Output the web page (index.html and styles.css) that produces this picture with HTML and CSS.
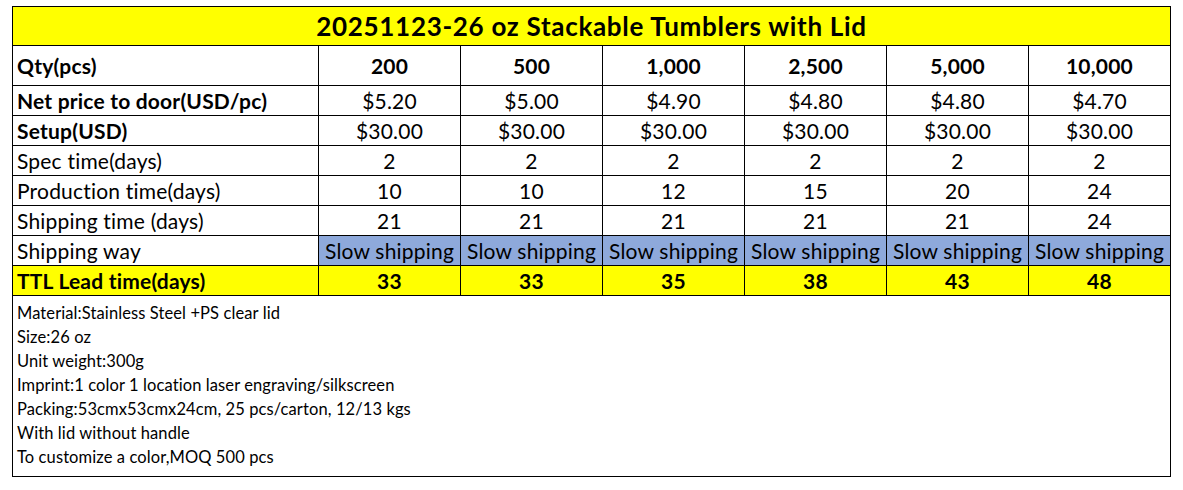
FILE: index.html
```html
<!DOCTYPE html>
<html>
<head>
<meta charset="utf-8">
<link rel="stylesheet" href="styles.css">
</head>
<body>
<table class="sheet">
  <colgroup>
    <col class="c-label"><col class="c-val"><col class="c-val"><col class="c-val"><col class="c-val"><col class="c-val"><col class="c-val">
  </colgroup>
  <tr class="r-title"><td colspan="7" class="title">20251123-26 oz Stackable Tumblers with Lid</td></tr>
  <tr class="r-qty bold"><td class="lbl">Qty(pcs)</td><td>200</td><td>500</td><td>1,000</td><td>2,500</td><td>5,000</td><td>10,000</td></tr>
  <tr class="r"><td class="lbl bold">Net price to door(USD/pc)</td><td>$5.20</td><td>$5.00</td><td>$4.90</td><td>$4.80</td><td>$4.80</td><td>$4.70</td></tr>
  <tr class="r"><td class="lbl bold">Setup(USD)</td><td>$30.00</td><td>$30.00</td><td>$30.00</td><td>$30.00</td><td>$30.00</td><td>$30.00</td></tr>
  <tr class="r"><td class="lbl">Spec time(days)</td><td>2</td><td>2</td><td>2</td><td>2</td><td>2</td><td>2</td></tr>
  <tr class="r"><td class="lbl">Production time(days)</td><td>10</td><td>10</td><td>12</td><td>15</td><td>20</td><td>24</td></tr>
  <tr class="r"><td class="lbl">Shipping time (days)</td><td>21</td><td>21</td><td>21</td><td>21</td><td>21</td><td>24</td></tr>
  <tr class="r r-way"><td class="lbl">Shipping way</td><td class="blue">Slow shipping</td><td class="blue">Slow shipping</td><td class="blue">Slow shipping</td><td class="blue">Slow shipping</td><td class="blue">Slow shipping</td><td class="blue">Slow shipping</td></tr>
  <tr class="r r-ttl bold"><td class="lbl">TTL Lead time(days)</td><td>33</td><td>33</td><td>35</td><td>38</td><td>43</td><td>48</td></tr>
  <tr class="r-notes"><td colspan="7" class="notes">
    <div class="note">Material:Stainless Steel +PS clear lid</div>
    <div class="note">Size:26 oz</div>
    <div class="note">Unit weight:300g</div>
    <div class="note">Imprint:1 color 1 location laser engraving/silkscreen</div>
    <div class="note">Packing:53cmx53cmx24cm, 25 pcs/carton, 12/13 kgs</div>
    <div class="note">With lid without handle</div>
    <div class="note">To customize a color,MOQ 500 pcs</div>
  </td></tr>
</table>
</body>
</html>
```
FILE: styles.css
```css
html, body {
  margin: 0;
  padding: 0;
  background: #ffffff;
}
body {
  padding: 6px 0 0 12px;
  font-family: Lato, "Liberation Sans", sans-serif;
  color: #000;
}
.sheet {
  border-collapse: collapse;
  table-layout: fixed;
  width: 1159px;
}
.c-label { width: 306px; }
.c-val { width: 142px; }
.sheet td {
  border: 1px solid #000;
  padding: 0;
  text-align: center;
  font-size: 21px;
  letter-spacing: 0.2px;
  line-height: 1;
  white-space: nowrap;
  overflow: hidden;
}
.sheet td.lbl {
  text-align: left;
  padding-left: 4px;
}
.bold, .bold td { font-weight: bold; }
.r-title td { height: 38px; }
.sheet td.title {
  background: #ffff00;
  font-size: 26px;
  letter-spacing: 0.7px;
  font-weight: bold;
}
.r-qty td { height: 39px; }
.r td { height: 29px; }
.blue { background: #8ea9db; }
.r-ttl td { background: #ffff00; }
.r-notes td { height: 175px; }
.sheet td.notes {
  text-align: left;
  vertical-align: top;
  padding: 5px 0 0 4px;
  font-size: 16.5px;
  letter-spacing: 0.1px;
}
.note {
  height: 24px;
  line-height: 24px;
}
```
